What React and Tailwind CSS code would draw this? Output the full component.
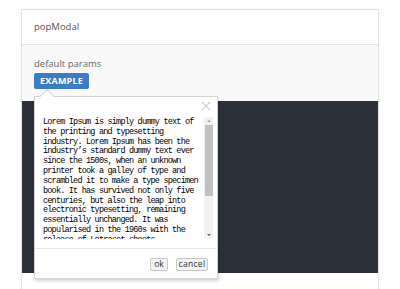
import React from "react";

const lines = [
  "Lorem Ipsum is simply dummy text of",
  "the printing and typesetting",
  "industry. Lorem Ipsum has been the",
  "industry\u2019s standard dummy text ever",
  "since the 1500s, when an unknown",
  "printer took a galley of type and",
  "scrambled it to make a type specimen",
  "book. It has survived not only five",
  "centuries, but also the leap into",
  "electronic typesetting, remaining",
  "essentially unchanged. It was",
  "popularised in the 1960s with the",
  "release of Letraset sheets",
];

export default function App() {
  return (
    <div className="w-[400px] h-[289px] bg-white overflow-hidden relative" style={{ fontFamily: '"Open Sans", "Liberation Sans", sans-serif' }}>
      <div className="ml-[21px] mt-[9px] w-[358px] border border-[#e3e3e3] shadow-[0_0_2px_rgba(0,0,0,0.06)]">
        <div className="h-[35px] bg-white border-b border-[#e3e3e3] flex items-center px-[12px] text-[9.5px] text-[#555]">
          popModal
        </div>
        <div className="bg-[#f9f9f9] pt-[12px]">
          <div className="px-[12px] text-[9.5px] text-[#666] leading-[14px]">default params</div>
          <div className="px-[12px] mt-[2px]">
            <div className="w-[55px] h-[16px] bg-[#3a7cc5] rounded-[2px] text-white text-[9px] font-bold flex items-center justify-center tracking-[0.2px]">
              EXAMPLE
            </div>
          </div>
          <div className="mt-[12px] h-[172px] bg-[#2c303b]" />
        </div>
        <div className="h-[20px] bg-white" />
      </div>

      {/* popover */}
      <div className="absolute left-[34px] top-[96px] w-[184px] h-[183px] bg-white border border-[#d5d5d5] shadow-[1px_2px_3px_rgba(0,0,0,0.18)]">
        <div className="absolute -top-[6px] left-[7px] w-[10px] h-[10px] bg-white border-l border-t border-[#d5d5d5] rotate-45" />
        <svg className="absolute left-[166px] top-[4px]" width="10" height="10" viewBox="0 0 10 10">
          <path d="M1 1 L9 9 M9 1 L1 9" stroke="#d0d0d0" strokeWidth="1.2" />
        </svg>
        <div className="absolute left-0 top-[20px] w-[182px] h-[122px] flex">
          <div className="flex-1 overflow-hidden pl-[8px] pt-[1px]">
            <div
              className="text-[8.5px] leading-[9.83px] text-[#000] tracking-[-0.8px] whitespace-pre"
              style={{ fontFamily: '"Liberation Mono", "DejaVu Sans Mono", monospace' }}
            >
              {lines.map((l, i) => (
                <div key={i}>{l}</div>
              ))}
            </div>
          </div>
          <div className="w-[9px] mr-[4px] bg-[#f1f1f1] flex flex-col items-center">
            <div className="h-[8px] flex items-center justify-center">
              <div className="w-0 h-0 border-l-[2px] border-r-[2px] border-b-[2px] border-l-transparent border-r-transparent border-b-[#a0a0a0]" />
            </div>
            <div className="w-[8px] h-[71px] bg-[#c1c1c1]" />
            <div className="flex-1" />
            <div className="h-[8px] flex items-center justify-center">
              <div className="w-0 h-0 border-l-[2px] border-r-[2px] border-t-[2px] border-l-transparent border-r-transparent border-t-[#606060]" />
            </div>
          </div>
        </div>
        <div className="absolute left-0 right-0 top-[151px] border-t border-[#e8e8e8]" />
        <div className="absolute right-[9px] top-[161px] flex gap-[8px]">
          <div className="w-[18px] h-[13px] border border-[#c8c8c8] bg-[#f3f3f3] rounded-[2px] text-[8.5px] text-[#333] flex items-center justify-center">ok</div>
          <div className="w-[32px] h-[13px] border border-[#c8c8c8] bg-[#f3f3f3] rounded-[2px] text-[8.5px] text-[#333] flex items-center justify-center tracking-[0.3px]">cancel</div>
        </div>
      </div>
    </div>
  );
}
